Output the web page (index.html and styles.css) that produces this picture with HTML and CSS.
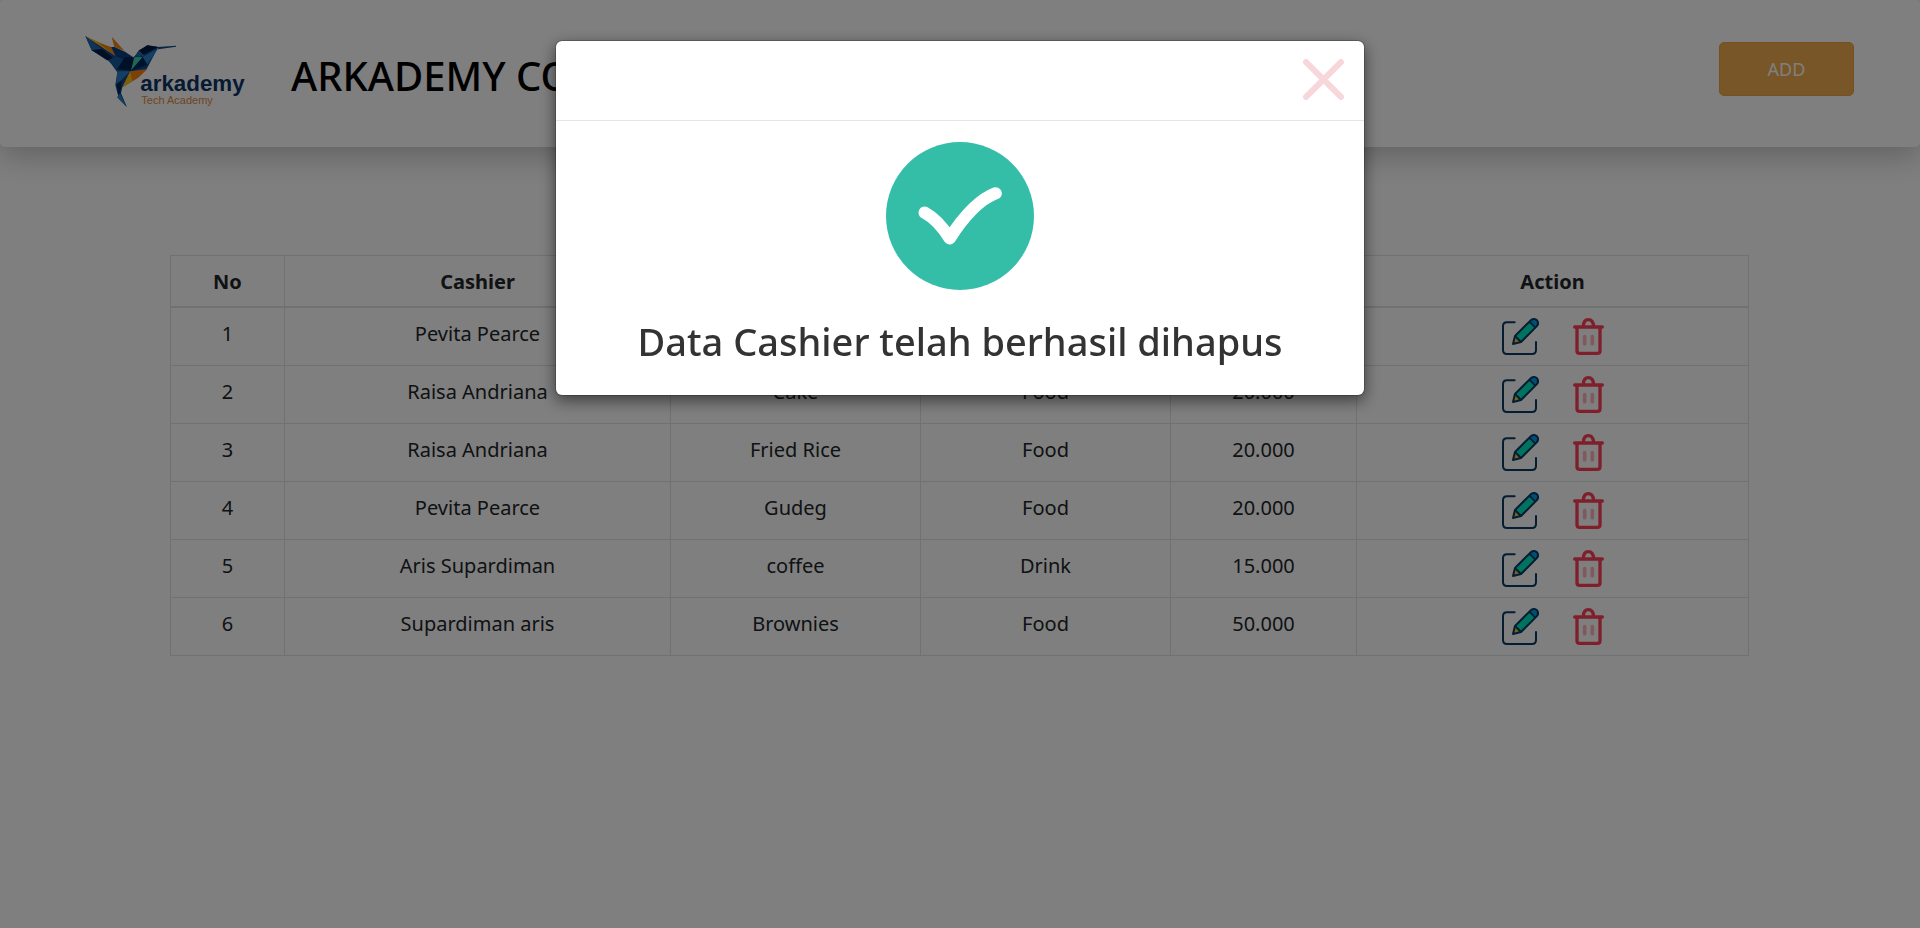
FILE: index.html
```html
<!DOCTYPE html>
<html lang="id">
<head>
<meta charset="utf-8">
<title>Arkademy Coffee Shop</title>
<link rel="stylesheet" href="styles.css">
</head>
<body>
<svg class="sprite" aria-hidden="true">
  <symbol id="edit" viewBox="0 0 111 111">
    <path d="M38 13H15Q3 13 3 25V96Q3 108 15 108H90Q102 108 102 96V72" fill="none" stroke="#0b3a66" stroke-width="6" stroke-linecap="round"/>
    <path d="M33 78L39 54L86 7Q96 -1 105 7Q112 16 104 25L57 72Z" fill="#00e6c0"/>
    <path d="M33 78L39 54L57 72Z" fill="#f5c828"/>
    <path d="M82 11L86 7Q96 -1 105 7Q112 16 104 25L100 29Z" fill="#00a0e6"/>
    <path d="M33 78L39 54L86 7Q96 -1 105 7Q112 16 104 25L57 72ZM39 54L57 72M82 11L100 29" fill="none" stroke="#0b3a66" stroke-width="6" stroke-linejoin="round"/>
  </symbol>
  <symbol id="trash" viewBox="0 0 93 111">
    <path d="M31 25Q32 5 46 5Q60 5 62 25M5 27H88M12 27V98Q12 106 20 106H73Q81 106 81 98V27" fill="none" stroke="#ff3f56" stroke-width="10" stroke-linecap="round"/>
    <path d="M35 56V77M58 56V77" stroke="#ff3f56" stroke-opacity=".4" stroke-width="11" stroke-linecap="round"/>
  </symbol>
</svg>

<header class="topbar">
  <svg class="logo" viewBox="0 0 540 270" role="img" aria-label="arkademy Tech Academy">
    <path d="M31 33L122 92L175 97L217 61L250 66L240 85L215 132L190 155L142 187L138 205L155 245L132 222L121 180L127 142L98 102L50 76Z" fill="#0c4b8c"/>
    <path d="M31 33L80 72L50 76Z" fill="#1c6bb0"/>
    <path d="M50 76L80 72L122 104L96 106Z" fill="#001c4c"/>
    <path d="M31 33L108 68L122 93L80 66Z" fill="#ffb010"/>
    <path d="M70 53L108 66L122 93Z" fill="#f58210"/>
    <path d="M110 35L148 77L118 66Z" fill="#f58210"/>
    <path d="M108 66L118 66L150 80L175 97L146 103L122 94Z" fill="#083d80"/>
    <path d="M122 94L146 103L127 132L98 106Z" fill="#155a9c"/>
    <path d="M127 132L150 96L177 98L168 137Z" fill="#00204f"/>
    <path d="M178 97L203 96L168 137Z" fill="#40cfa8"/>
    <path d="M178 97L192 76L217 61L250 66L208 88Z" fill="#00183f"/>
    <path d="M178 97L192 76L208 92Z" fill="#1c6bb0"/>
    <path d="M203 96L250 70L217 118Z" fill="#2a7fc4"/>
    <path d="M203 96L217 120L168 137Z" fill="#00275c"/>
    <path d="M248 66L303 62V65L250 73Z" fill="#0c4b8c"/>
    <path d="M127 139H166L140 164L124 178Z" fill="#2a7fc4"/>
    <path d="M124 178L140 166L136 205L155 245L132 216Z" fill="#00275c"/>
    <path d="M135 205L155 245L126 217Z" fill="#2a7fc4"/>
    <path d="M166 139L217 132L190 158L142 187Z" fill="#f58210"/>
    <path d="M166 139L172 168L142 187Z" fill="#ffbe10"/>
    <text class="logo-name" x="196" y="197">arkademy</text>
    <text class="logo-tag" x="199" y="236">Tech Academy</text>
  </svg>
  <h1 class="brand">ARKADEMY COFFEE SHOP</h1>
  <button class="add" type="button">ADD</button>
</header>

<main class="content">
  <table class="orders">
    <colgroup><col class="c-no"><col class="c-cashier"><col class="c-product"><col class="c-category"><col class="c-price"><col class="c-action"></colgroup>
    <thead>
      <tr><th>No</th><th>Cashier</th><th>Product</th><th>Category</th><th>Price</th><th>Action</th></tr>
    </thead>
    <tbody>
      <tr><td>1</td><td>Pevita Pearce</td><td></td><td></td><td></td><td><div class="actions"><button type="button" aria-label="Edit"><svg class="i-edit"><use href="#edit"/></svg></button><button type="button" aria-label="Delete"><svg class="i-trash"><use href="#trash"/></svg></button></div></td></tr>
      <tr><td>2</td><td>Raisa Andriana</td><td>Cake</td><td>Food</td><td>20.000</td><td><div class="actions"><button type="button" aria-label="Edit"><svg class="i-edit"><use href="#edit"/></svg></button><button type="button" aria-label="Delete"><svg class="i-trash"><use href="#trash"/></svg></button></div></td></tr>
      <tr><td>3</td><td>Raisa Andriana</td><td>Fried Rice</td><td>Food</td><td>20.000</td><td><div class="actions"><button type="button" aria-label="Edit"><svg class="i-edit"><use href="#edit"/></svg></button><button type="button" aria-label="Delete"><svg class="i-trash"><use href="#trash"/></svg></button></div></td></tr>
      <tr><td>4</td><td>Pevita Pearce</td><td>Gudeg</td><td>Food</td><td>20.000</td><td><div class="actions"><button type="button" aria-label="Edit"><svg class="i-edit"><use href="#edit"/></svg></button><button type="button" aria-label="Delete"><svg class="i-trash"><use href="#trash"/></svg></button></div></td></tr>
      <tr><td>5</td><td>Aris Supardiman</td><td>coffee</td><td>Drink</td><td>15.000</td><td><div class="actions"><button type="button" aria-label="Edit"><svg class="i-edit"><use href="#edit"/></svg></button><button type="button" aria-label="Delete"><svg class="i-trash"><use href="#trash"/></svg></button></div></td></tr>
      <tr><td>6</td><td>Supardiman aris</td><td>Brownies</td><td>Food</td><td>50.000</td><td><div class="actions"><button type="button" aria-label="Edit"><svg class="i-edit"><use href="#edit"/></svg></button><button type="button" aria-label="Delete"><svg class="i-trash"><use href="#trash"/></svg></button></div></td></tr>
    </tbody>
  </table>
</main>

<div class="backdrop">
  <section class="modal" role="dialog" aria-modal="true" aria-labelledby="modal-title">
    <div class="modal-head">
      <button class="close" type="button" aria-label="Close">
        <svg viewBox="0 0 40 40"><path d="M3 3L37 37M37 3L3 37" stroke="#f8d7dc" stroke-width="6" stroke-linecap="round"/></svg>
      </button>
    </div>
    <div class="modal-body">
      <svg class="check" viewBox="48 36 444 444" aria-hidden="true">
        <circle cx="270" cy="258" r="222" fill="#34bea8"/>
        <path d="M164 248Q205 270 239 325Q310 215 377 190" fill="none" stroke="#fff" stroke-width="37" stroke-linecap="round" stroke-linejoin="round"/>
      </svg>
      <h2 class="modal-title" id="modal-title">Data Cashier telah berhasil dihapus</h2>
    </div>
  </section>
</div>
</body>
</html>
```
FILE: styles.css
```css
* { box-sizing: border-box; }

body {
  margin: 0;
  background: #fff;
  color: #212529;
  font-family: "Segoe UI", "Noto Sans", sans-serif;
  font-size: 20px;
}

.sprite { position: absolute; width: 0; height: 0; }

button {
  padding: 0;
  border: 0;
  background: none;
  font: inherit;
  cursor: pointer;
}

.topbar {
  display: flex;
  align-items: flex-start;
  padding: 25px 66px 32px 75px;
  border-radius: 5px;
  background: #fff;
  box-shadow: 0 8px 32px rgba(0, 0, 0, .25);
}

.logo { width: 180px; height: 90px; flex: none; }

.logo-name {
  font: bold 67px "Liberation Sans", sans-serif;
  fill: #0c3468;
}

.logo-tag {
  font: 33px "Liberation Sans", sans-serif;
  fill: #e08a3c;
}

.brand {
  margin: 23px 0 0 36px;
  color: #000;
  font-size: 40px;
  font-weight: 500;
  line-height: 56px;
}

.add {
  width: 135px;
  height: 54px;
  margin: 17px 0 0 auto;
  border: 1px solid #eea236;
  border-radius: 5px;
  background: #f0ad4e;
  color: #fff;
  font-size: 18px;
}

.content { padding: 108px 171px 0 170px; }

.orders {
  width: 100%;
  border-collapse: collapse;
  table-layout: fixed;
  text-align: center;
}

.orders th,
.orders td {
  padding: 10px 12px;
  border: 1px solid #dee2e6;
  line-height: 32px;
  vertical-align: top;
}

.orders thead th {
  padding-bottom: 8px;
  border-bottom-width: 2px;
}

.c-no { width: 114px; }
.c-cashier { width: 386px; }
.c-product, .c-category { width: 250px; }
.c-price { width: 186px; }

.actions { display: flex; justify-content: center; gap: 34px; }
.actions svg { display: block; height: 37px; }
.i-edit { width: 37px; }
.i-trash { width: 31px; }

.backdrop {
  position: fixed;
  inset: 0;
  padding: 40px 16px;
  background: rgba(0, 0, 0, .5);
}

.modal {
  max-width: 810px;
  margin: 0 auto;
  border: 1px solid rgba(0, 0, 0, .2);
  border-radius: 7px;
  background: #fff;
  background-clip: padding-box;
  box-shadow: 0 5px 15px rgba(0, 0, 0, .5);
}

.modal-head {
  display: flex;
  justify-content: flex-end;
  padding: 18px 20px 20px;
  border-bottom: 1px solid #e5e5e5;
}

.close svg { display: block; width: 41px; height: 41px; }

.modal-body {
  display: flex;
  flex-direction: column;
  align-items: center;
  padding: 21px 16px 26px;
}

.check { width: 148px; height: 148px; }

.modal-title {
  margin: 23px 0 0;
  color: #333;
  font-size: 38px;
  font-weight: 500;
  line-height: 56px;
  text-align: center;
}
```
